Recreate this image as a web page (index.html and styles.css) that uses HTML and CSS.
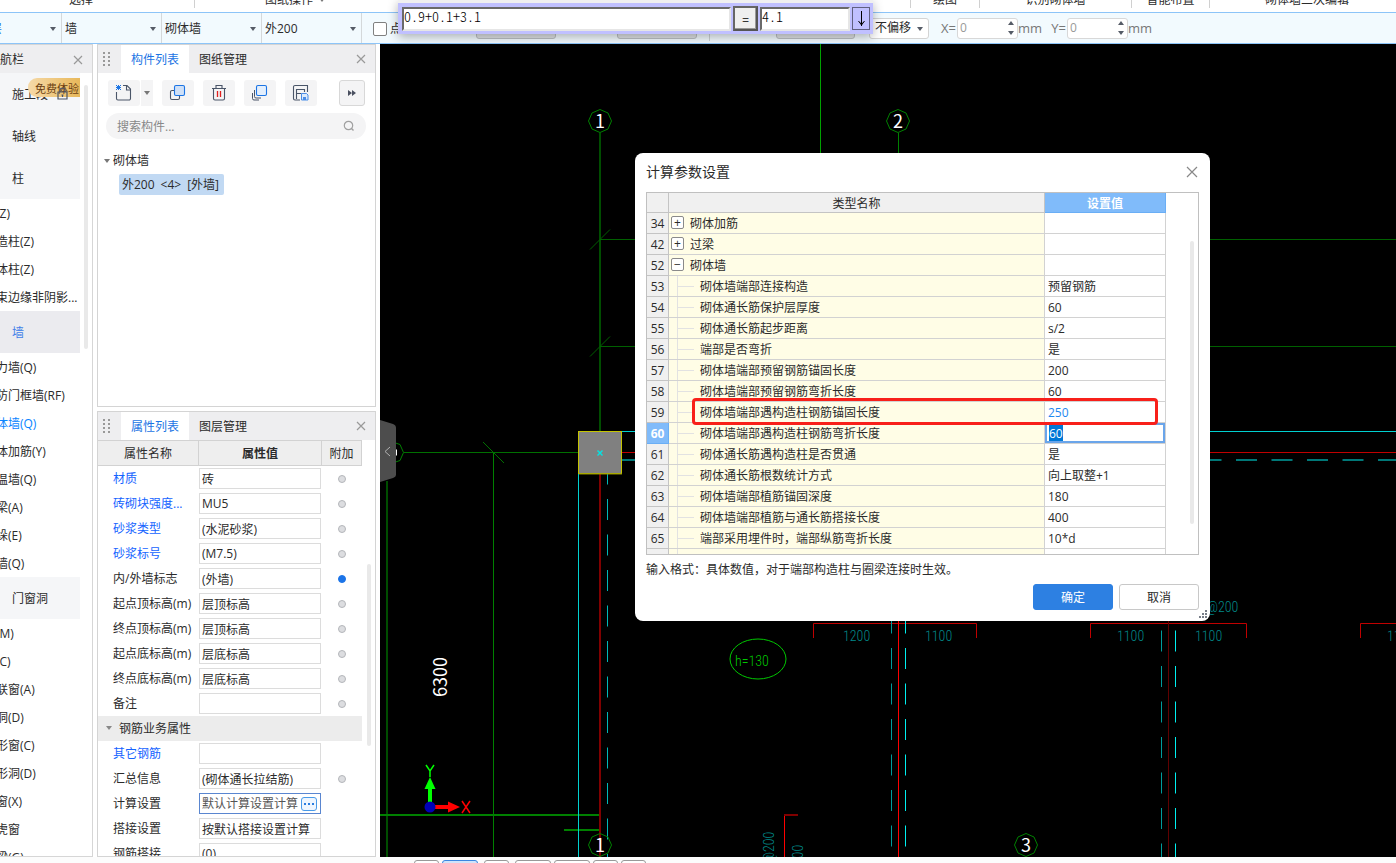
FILE: index.html
```html
<!DOCTYPE html>
<html lang="zh-CN">
<head>
<meta charset="utf-8">
<title>计算参数设置</title>
<link rel="stylesheet" href="styles.css">
</head>
<body>
<div class="ribbon">
  <div class="ribbon-group g-select">选择</div>
  <div class="ribbon-group g-sheet">图纸操作<i class="caret"></i></div>
  <div class="ribbon-group g-fill"></div>
  <div class="ribbon-group g-draw">绘图</div>
  <div class="ribbon-group g-detect">识别砌体墙</div>
  <div class="ribbon-group g-smart">智能布置</div>
  <div class="ribbon-group g-edit">砌体墙二次编辑</div>
</div>

<div class="options">
  <div class="combo combo-floor"><select aria-label="楼层"><option>首层</option></select></div>
  <div class="combo"><select aria-label="类别"><option>墙</option></select></div>
  <div class="combo"><select aria-label="类型"><option>砌体墙</option></select></div>
  <div class="combo"><select aria-label="构件"><option>外200</option></select></div>
  <label class="check"><input type="checkbox">点加长度</label>
  <button class="ghost" aria-label="长度"></button>
  <button class="ghost second" aria-label="反向长度"></button>
  <span class="rule"></span>
  <button class="ghost third" aria-label="角度"></button>
  <div class="combo boxed"><select aria-label="偏移"><option>不偏移</option></select></div>
  <label class="coord" for="cx">X=</label>
  <span class="spin"><input id="cx" value="0"><svg width="6" height="14" viewBox="0 0 6 14"><path d="M0 4 3 0l3 4zM0 10l3 4 3-4z"/></svg></span>
  <span class="unit">mm</span>
  <label class="coord" for="cy">Y=</label>
  <span class="spin"><input id="cy" value="0"><svg width="6" height="14" viewBox="0 0 6 14"><path d="M0 4 3 0l3 4zM0 10l3 4 3-4z"/></svg></span>
  <span class="unit">mm</span>
</div>

<div class="calc">
  <input class="expr" value="0.9+0.1+3.1" aria-label="算式">
  <button class="equals">=</button>
  <input class="result" value="4.1" aria-label="结果">
  <button class="drop" aria-label="展开"><svg width="9" height="18" viewBox="0 0 9 18"><path d="M4.500 1v15M1.500 11l3 4 3-4M3.500 13h2" fill="none" stroke="#000"/></svg></button>
</div>

<main class="work">
  <nav class="nav">
    <header class="nav-head"><span>导航栏</span><button class="close" aria-label="关闭"><svg width="10" height="10" viewBox="0 0 10 10"><path d="M1 1l8 8M9 1 1 9"/></svg></button></header>
    <div class="nav-body">
      <div class="nav-list">
        <div class="cat">施工段
          <span class="trial">免费体验</span>
          <svg class="lock" width="11" height="13" viewBox="0 0 11 13"><path d="M3 5V3.500a2.500 2.500 0 0 1 5 0V5M1 5h9v7H1zM5.500 7.500v2.500M4.500 8h2" fill="none" stroke="#4a5568" stroke-width="1.200"/></svg>
        </div>
        <div class="cat">轴线</div>
        <div class="cat">柱</div>
        <a class="sub">柱(Z)</a>
        <a class="sub">构造柱(Z)</a>
        <a class="sub">砌体柱(Z)</a>
        <a class="sub">约束边缘非阴影...</a>
        <div class="cat current">墙</div>
        <a class="sub">剪力墙(Q)</a>
        <a class="sub">人防门框墙(RF)</a>
        <a class="sub active">砌体墙(Q)</a>
        <a class="sub">砌体加筋(Y)</a>
        <a class="sub">保温墙(Q)</a>
        <a class="sub">暗梁(A)</a>
        <a class="sub">墙垛(E)</a>
        <a class="sub">幕墙(Q)</a>
        <div class="cat">门窗洞</div>
        <a class="sub">门(M)</a>
        <a class="sub">窗(C)</a>
        <a class="sub">门联窗(A)</a>
        <a class="sub">墙洞(D)</a>
        <a class="sub">带形窗(C)</a>
        <a class="sub">带形洞(D)</a>
        <a class="sub">飘窗(X)</a>
        <a class="sub">老虎窗</a>
        <a class="sub">过梁(G)</a>
      </div>
      <span class="thumb nav-thumb"></span>
    </div>
  </nav>

  <div class="side">
    <section class="panel parts">
      <header class="tabs">
        <svg class="grip" width="7" height="14" viewBox="0 0 7 14"><path d="M0 0h2v2H0zM5 0h2v2H5zM0 4h2v2H0zM5 4h2v2H5zM0 8h2v2H0zM5 8h2v2H5zM0 12h2v2H0zM5 12h2v2H5z"/></svg>
        <button class="tab on">构件列表</button>
        <button class="tab">图纸管理</button>
        <button class="close" aria-label="关闭"><svg width="10" height="10" viewBox="0 0 10 10"><path d="M1 1l8 8M9 1 1 9"/></svg></button>
      </header>
      <div class="tools">
        <div class="split">
          <button class="tool" aria-label="新建"><svg width="18" height="18" viewBox="0 0 18 18"><path d="M1.500 8v6.500a1.500 1.500 0 0 0 1.500 1.500h11a1.500 1.500 0 0 0 1.500-1.500V5L12 1.500H8M11.500 2v4h4" fill="none" stroke="#4a5568" stroke-width="1.100"/><path d="M1 1l5 5M6 1 1 6M3.500 1v5M1 3.500h5" stroke="#1b74e4" fill="none"/></svg></button>
          <button class="more" aria-label="更多新建"><i class="caret"></i></button>
        </div>
        <button class="tool" aria-label="复制"><svg width="18" height="18" viewBox="0 0 18 18"><rect x="1.500" y="6.500" width="9" height="9" rx="1.500" fill="#f4f4f5" stroke="#4a5568" stroke-width="1.100"/><rect x="5.500" y="1.500" width="10" height="10" rx="1.500" fill="#cfe0f7" stroke="#1b74e4" stroke-width="1.100"/></svg></button>
        <button class="tool" aria-label="删除"><svg width="18" height="18" viewBox="0 0 18 18"><path d="M2 4.500h14M6 4V1.500h6V4M3.500 5v9.500A1.500 1.500 0 0 0 5 16h8a1.500 1.500 0 0 0 1.500-1.500V5" fill="none" stroke="#4a5568" stroke-width="1.100"/><path d="M7.500 7v6M10.500 7v6" stroke="#e02020" stroke-width="1.300"/></svg></button>
        <button class="tool" aria-label="层间复制"><svg width="18" height="18" viewBox="0 0 18 18"><path d="M1.500 9v5.500A1.500 1.500 0 0 0 3 16h5M3.500 6v6.500A1.500 1.500 0 0 0 5 14h5" fill="none" stroke="#4a5568"/><rect x="5.500" y="1.500" width="10" height="10" rx="1.500" fill="#e3effd" stroke="#1b74e4" stroke-width="1.100"/></svg></button>
        <button class="tool" aria-label="存档"><svg width="18" height="18" viewBox="0 0 18 18"><path d="M8 16H3a1.500 1.500 0 0 1-1.500-1.500V3A1.500 1.500 0 0 1 3 1.500h12.500V8M4.500 15V5.500h8V8M4.500 9.500h5" fill="none" stroke="#4a5568" stroke-width="1.100"/><path d="M9.500 9.500h5l1.500 1.500v5H9.500z" fill="#dceafb" stroke="#4a8de8"/><path d="M11 13h3v3h-3z" fill="#4a8de8"/></svg></button>
        <button class="tool expand" aria-label="展开"><svg width="8" height="6" viewBox="0 0 8 6"><path d="M0 0l4 3-4 3zM4 0l4 3-4 3z" fill="#4a5060"/></svg></button>
      </div>
      <label class="search"><input placeholder="搜索构件..." aria-label="搜索构件"><svg width="12" height="12" viewBox="0 0 12 12"><circle cx="5.500" cy="5.500" r="4.200" fill="none" stroke="#a0a0a0" stroke-width="1.200"/><path d="M8.500 8.500l2 2" stroke="#a0a0a0" stroke-width="1.400"/></svg></label>
      <div class="tree">
        <div class="node"><i class="caret"></i>砌体墙</div>
        <div class="leaf"><span>外200</span><span>&lt;4&gt;</span><span>[外墙]</span></div>
      </div>
    </section>

    <section class="panel props">
      <header class="tabs">
        <svg class="grip" width="7" height="14" viewBox="0 0 7 14"><path d="M0 0h2v2H0zM5 0h2v2H5zM0 4h2v2H0zM5 4h2v2H5zM0 8h2v2H0zM5 8h2v2H5zM0 12h2v2H0zM5 12h2v2H5z"/></svg>
        <button class="tab on">属性列表</button>
        <button class="tab">图层管理</button>
        <button class="close" aria-label="关闭"><svg width="10" height="10" viewBox="0 0 10 10"><path d="M1 1l8 8M9 1 1 9"/></svg></button>
      </header>
      <div class="props-body">
        <table class="ptable">
          <thead><tr><th class="pn">属性名称</th><th class="pv">属性值</th><th class="pa">附加</th></tr></thead>
          <tbody>
            <tr><td class="blue"><label for="p1">材质</label></td><td><input id="p1" value="砖"></td><td><input type="radio" aria-label="附加"></td></tr>
            <tr><td class="blue"><label for="p2">砖砌块强度...</label></td><td><input id="p2" value="MU5"></td><td><input type="radio" aria-label="附加"></td></tr>
            <tr><td class="blue"><label for="p3">砂浆类型</label></td><td><input id="p3" value="(水泥砂浆)"></td><td><input type="radio" aria-label="附加"></td></tr>
            <tr><td class="blue"><label for="p4">砂浆标号</label></td><td><input id="p4" value="(M7.5)"></td><td><input type="radio" aria-label="附加"></td></tr>
            <tr><td><label for="p5">内/外墙标志</label></td><td><input id="p5" value="(外墙)"></td><td><input type="radio" checked aria-label="附加"></td></tr>
            <tr><td><label for="p6">起点顶标高(m)</label></td><td><input id="p6" value="层顶标高"></td><td><input type="radio" aria-label="附加"></td></tr>
            <tr><td><label for="p7">终点顶标高(m)</label></td><td><input id="p7" value="层顶标高"></td><td><input type="radio" aria-label="附加"></td></tr>
            <tr><td><label for="p8">起点底标高(m)</label></td><td><input id="p8" value="层底标高"></td><td><input type="radio" aria-label="附加"></td></tr>
            <tr><td><label for="p9">终点底标高(m)</label></td><td><input id="p9" value="层底标高"></td><td><input type="radio" aria-label="附加"></td></tr>
            <tr><td><label for="p10">备注</label></td><td><input id="p10" value=""></td><td><input type="radio" aria-label="附加"></td></tr>
            <tr class="group"><th colspan="3"><i class="caret"></i>钢筋业务属性</th></tr>
            <tr><td class="blue"><label for="p11">其它钢筋</label></td><td><input id="p11" value=""></td><td></td></tr>
            <tr><td><label for="p12">汇总信息</label></td><td><input id="p12" value="(砌体通长拉结筋)"></td><td><input type="radio" aria-label="附加"></td></tr>
            <tr><td><label for="p13">计算设置</label></td><td><div class="picker"><input id="p13" value="默认计算设置计算"><button aria-label="设置"><svg width="10" height="2" viewBox="0 0 10 2"><path d="M0 0h2v2H0zM4 0h2v2H4zM8 0h2v2H8z" fill="#2b7de0"/></svg></button></div></td><td></td></tr>
            <tr><td><label for="p14">搭接设置</label></td><td><input id="p14" value="按默认搭接设置计算"></td><td></td></tr>
            <tr><td><label for="p15">钢筋搭接</label></td><td><input id="p15" value="(0)"></td><td></td></tr>
          </tbody>
        </table>
        <span class="thumb props-thumb"></span>
      </div>
    </section>
  </div>

  <section class="canvas">
    <svg class="cad" width="100%" height="100%">
      <g transform="translate(-380 -44)" fill="none">
        <g stroke="#004d00" stroke-width="2">
          <path d="M600 133v298M387 481v376"/>
          <path stroke="#006000" stroke-width="1" d="M600 239.500h2400M600 346.500h2400M590 249.500l20-20M590 356.500l20-20"/>
        </g>
        <g stroke="#008000">
          <path stroke="#00a000" d="M820.500 44v120"/>
          <path d="M898.500 133v30M493.500 453v404"/>
          <path d="M404 452.500h174M483 442l21 21" stroke="#007000"/>
          <path d="M380 815h220M564 830h36" stroke-width="2"/>
        </g>
        <path d="M578.500 474v383" stroke="#00d0d0"/>
        <path d="M600 474v383" stroke="#800000" stroke-width="2"/>
        <path d="M607.500 463.500v394" stroke="#00b8b8" stroke-dasharray="21 14.500"/>
        <path d="M622 431.500h2400" stroke="#00d0d0"/>
        <path d="M622 452.500h2400" stroke="#c00000"/>
        <path d="M622 460h30M1200.500 460h2000" stroke="#007878" stroke-width="2" stroke-dasharray="21 14.500"/>
        <rect x="578.500" y="431.500" width="43" height="42" fill="#808080" stroke="#c4c400"/>
        <path d="M579 474h43" stroke="#909000"/>
        <path d="M597.500 450.500l5 5M602.500 450.500l-5 5" stroke="#00e5e5" stroke-width="1.400"/>
        <path d="M813.500 638v-14.500h163V638M1090.500 638v-14.500h156V638M1360.500 638v-14.500H3000" stroke="#c00000"/>
        <path d="M898.500 615v242" stroke="#f00"/>
        <path d="M1168.500 615v242" stroke="#600000"/>
        <g stroke-dasharray="21 14.500">
          <path d="M891.500 612.500v236" stroke="#009c9c"/>
          <path d="M905.500 612.500v236" stroke="#00f0f0"/>
          <path d="M1161.500 630.500v227" stroke="#009c9c"/>
          <path d="M1175.500 630.500v227" stroke="#00f0f0"/>
        </g>
        <path d="M784.500 857v-42" stroke="#f00"/>
        <path d="M784 815h14" stroke="#800000" stroke-width="2"/>
        <g stroke="#008000">
          <path d="M600 109.500l8 3.500 3.500 8-3.500 8-8 3.500-8-3.500-3.500-8 3.500-8z"/>
          <path d="M898 109.500l8 3.500 3.500 8-3.500 8-8 3.500-8-3.500-3.500-8 3.500-8z"/>
          <path d="M600 833.500l8 3.500 3.500 8-3.500 8-8 3.500-8-3.500-3.500-8 3.500-8z"/>
          <path d="M1026 833.500l8 3.500 3.500 8-3.500 8-8 3.500-8-3.500-3.500-8 3.500-8z"/>
          <path d="M394 442.500l6 2 3.500 8-3.500 8-6 2"/>
        </g>
        <ellipse cx="758" cy="659" rx="28" ry="20" stroke="#00c800"/>
        <g class="axis-text">
          <text x="600" y="128">1</text>
          <text x="898" y="128">2</text>
          <text x="600" y="852">1</text>
          <text x="1026" y="852">3</text>
          <text transform="translate(447 677) rotate(-90)">6300</text>
        </g>
        <g class="dim-text">
          <text x="843" y="641">1200</text>
          <text x="925" y="641">1100</text>
          <text x="1117" y="641">1100</text>
          <text x="1195" y="641">1100</text>
          <text x="1387" y="641">1100</text>
          <text x="1207" y="612">@200</text>
          <text transform="translate(774 863) rotate(-90)">@200</text>
          <text transform="translate(803 872) rotate(-90)">1100</text>
          <text class="lime" x="735" y="666">h=130</text>
        </g>
        <path d="M430 807v-20" stroke="#0f0" stroke-width="4"/>
        <path d="M424.500 789l5.500-12 5.500 12z" fill="#0f0"/>
        <path d="M430 807h20" stroke="#f00" stroke-width="4"/>
        <path d="M448 801.500l12 5.500-12 5.500z" fill="#f00"/>
        <circle cx="430" cy="807" r="5.500" fill="#0000b8"/>
        <path d="M426 765l4 6 4-6M430 771v6" stroke="#0f0" stroke-width="1.500"/>
        <path d="M462 801l8 12M470 801l-8 12" stroke="#f00" stroke-width="1.500"/>
        <path d="M380 420l13 4q3 1 3 4v47q0 2-3 3l-13 4z" fill="#4d4d4d"/>
        <path d="M390 447l-5 4.500 5 4.500" stroke="#b0b0b0"/>
        <path d="M396.500 449.500v6" stroke="#fff"/>
      </g>
    </svg>

    <div class="dialog" role="dialog" aria-labelledby="dt">
      <header class="dlg-head"><h1 id="dt">计算参数设置</h1><button class="close big" aria-label="关闭"><svg width="12" height="12" viewBox="0 0 12 12"><path d="M1 1l10 10M11 1 1 11"/></svg></button></header>
      <div class="grid-wrap">
        <table class="grid">
          <thead><tr><th class="c-no"></th><th class="c-name">类型名称</th><th class="c-val">设置值</th></tr></thead>
          <tbody>
            <tr><th>34</th><td class="top"><span class="branch"><button class="tog">+</button>砌体加筋</span></td><td></td></tr>
            <tr><th>42</th><td class="top"><span class="branch"><button class="tog">+</button>过梁</span></td><td></td></tr>
            <tr><th>52</th><td class="top"><span class="branch"><button class="tog">−</button>砌体墙</span></td><td></td></tr>
            <tr><th>53</th><td class="kid">砌体墙端部连接构造</td><td>预留钢筋</td></tr>
            <tr><th>54</th><td class="kid">砌体通长筋保护层厚度</td><td>60</td></tr>
            <tr><th>55</th><td class="kid">砌体通长筋起步距离</td><td>s/2</td></tr>
            <tr><th>56</th><td class="kid">端部是否弯折</td><td>是</td></tr>
            <tr><th>57</th><td class="kid">砌体墙端部预留钢筋锚固长度</td><td>200</td></tr>
            <tr><th>58</th><td class="kid">砌体墙端部预留钢筋弯折长度</td><td>60</td></tr>
            <tr><th>59</th><td class="kid">砌体墙端部遇构造柱钢筋锚固长度</td><td class="changed">250</td></tr>
            <tr class="cur"><th>60</th><td class="kid">砌体墙端部遇构造柱钢筋弯折长度</td><td class="edit"><input id="cell" value="60" aria-label="设置值"></td></tr>
            <tr><th>61</th><td class="kid">砌体通长筋遇构造柱是否贯通</td><td>是</td></tr>
            <tr><th>62</th><td class="kid">砌体通长筋根数统计方式</td><td>向上取整+1</td></tr>
            <tr><th>63</th><td class="kid">砌体墙端部植筋锚固深度</td><td>180</td></tr>
            <tr><th>64</th><td class="kid">砌体墙端部植筋与通长筋搭接长度</td><td>400</td></tr>
            <tr><th>65</th><td class="kid">端部采用埋件时，端部纵筋弯折长度</td><td>10*d</td></tr>
            <tr><th></th><td class="kid"></td><td></td></tr>
          </tbody>
        </table>
        <span class="thumb grid-thumb"></span>
      </div>
      <p class="hint">输入格式：具体数值，对于端部构造柱与圈梁连接时生效。</p>
      <footer class="dlg-foot"><button class="btn primary">确定</button><button class="btn">取消</button></footer>
      <span class="mark"></span>
      <svg class="resize" width="8" height="8" viewBox="0 0 8 8"><path d="M6 0h2v2H6zM3 3h2v2H3zM6 3h2v2H6zM0 6h2v2H0zM3 6h2v2H3zM6 6h2v2H6z" fill="#777d88"/></svg>
    </div>
  </section>
</main>

<footer class="status">
  <button aria-label="视图1"></button><button class="wide on" aria-label="视图2"></button><button class="apart" aria-label="视图3"></button><button class="wide apart" aria-label="视图4"></button><button class="wide" aria-label="视图5"></button><button aria-label="视图6"></button><button aria-label="视图7"></button>
</footer>
<script src="main.js"></script>
</body>
</html>
```
FILE: main.js
```js
document.getElementById('cell').select();
```
FILE: styles.css
```css
* { box-sizing: border-box; }
body {
  margin: 0;
  height: 100vh;
  display: flex;
  flex-direction: column;
  overflow: hidden;
  background: #fff;
  color: #2b2b2b;
  font: 12px/16px "Open Sans", "Noto Sans CJK SC", sans-serif;
}
button, input, select { font: inherit; color: inherit; margin: 0; padding: 0; border: 0; background: none; border-radius: 0; }
input { min-width: 0; outline: 0; }
svg { display: block; flex: none; }
.caret { flex: none; width: 0; height: 0; border: 3px solid transparent; border-top: 4px solid #777; border-bottom: 0; }
.thumb { flex: none; width: 4px; border-radius: 2px; background: #e9e9e9; }

/* ribbon captions */
.ribbon { flex: none; height: 12px; display: flex; overflow: hidden; }
.ribbon-group { flex: none; display: flex; align-items: flex-end; justify-content: center; gap: 6px; white-space: nowrap; border-right: 1px solid #d0d0d0; height: 8px; }
.ribbon-group .caret { margin-bottom: 6px; }
.g-select { width: 195px; padding-right: 32px; }
.g-sheet { width: 204px; border: 0; padding-right: 4px; }
.g-fill { width: 512px; }
.g-draw { width: 69px; }
.g-detect { width: 152px; }
.g-smart { width: 78px; }
.g-edit { width: 194px; border: 0; }

/* option bar */
.options { flex: none; height: 32px; display: flex; align-items: center; background: #f2fafe; border: 1px solid #8cc4f8; border-width: 1px 0; white-space: nowrap; }
.combo { position: relative; flex: none; width: 100px; height: 30px; border-right: 1px solid #d4d8da; }
.combo::after { content: ""; position: absolute; right: 5px; top: 14px; border: 3px solid transparent; border-top: 4px solid #555b66; border-bottom: 0; }
.combo select { appearance: none; width: 100%; height: 100%; padding: 1px 0 0 3px; outline: 0; }
.combo-floor { width: 62px; }
.combo-floor select { color: #1b74e4; padding-left: 0; text-indent: -22px; }
.combo.boxed { width: 60px; height: 21px; margin-left: 14px; background: #fff; border: 1px solid #d4d4d4; border-radius: 3px; }
.combo.boxed::after { top: 8px; }
.combo.boxed select { padding: 0 0 0 5px; }
.check { flex: none; width: 114px; padding: 1px 0 0 11px; display: flex; align-items: center; gap: 3px; overflow: hidden; }
.check input { appearance: none; flex: none; width: 14px; height: 14px; border: 1px solid #808080; border-radius: 2px; background: #fff; }
.ghost { flex: none; width: 80px; height: 22px; background: #dfe3e5; border: 1px solid #bcc0c4; border-radius: 3px; }
.ghost.second { margin-left: 61px; }
.ghost.third { margin-left: 66px; width: 79px; }
.rule { width: 1px; height: 26px; margin-left: 12px; background: #cdd2d5; }
.coord { flex: none; color: #777; width: 28px; text-align: right; font-size: 13px; padding-right: 1px; }
.spin { position: relative; flex: none; width: 61px; height: 21px; background: #fff; border: 1px solid #d8d8d8; border-radius: 3px; display: flex; align-items: center; padding: 0 3px 0 2px; color: #999; }
.spin input { flex: 1; }
.spin svg { fill: #555b66; }
.unit { flex: none; color: #777; font-size: 13px; width: 21px; }

/* floating calculator */
.calc { position: absolute; z-index: 5; left: 398px; top: 0; width: 475px; height: 34px; display: flex; align-items: center; gap: 2px; padding: 0 3px 0 4px; background: #c0c0ff; border-top: 3px solid #f0f0f0; box-shadow: 0 3px 10px rgba(0,0,0,.3); color: #000; font-family: "Noto Sans CJK SC", sans-serif; }
.calc input { font-size: 14px; font-weight: 300; font-feature-settings: "hwid"; height: 24px; background: #fff; border: 2px solid; border-color: #6a6a6a #e6e6e6 #e6e6e6 #6a6a6a; padding: 0 0 5px; }
.expr { flex: 1; }
.result { width: 90px; }
.equals { width: 25px; height: 25px; background: #efefef; border: 2px solid; border-color: #666 #555 #555 #666; box-shadow: inset -1px -1px #999; line-height: 16px; }
.drop { width: 18px; height: 23px; border: 1px solid #606080; display: flex; align-items: center; justify-content: center; }

.work { flex: 1; min-height: 0; display: flex; }
.close { width: 20px; height: 20px; display: flex; align-items: center; justify-content: center; margin-left: auto; }
.close path { stroke: #999; stroke-width: 1.2; fill: none; }

/* navigation */
.nav { flex: none; width: 93px; display: flex; flex-direction: column; overflow: hidden; border: 1px solid #d6d6d6; border-left: 0; margin-right: 4px; }
.nav-head { flex: none; height: 28px; display: flex; align-items: center; background: #eeeef0; text-indent: -12px; padding: 2px 4px 0 0; }
.nav-body { flex: 1; min-height: 0; display: flex; gap: 4px; overflow: hidden; }
.nav-list { width: 80px; flex: none; }
.nav-thumb { height: 264px; margin-top: 12px; }
.cat { position: relative; height: 42px; line-height: 44px; padding-left: 12px; background: #f5f6f8; }
.cat.current { background: #ebebef; color: #3f7ee8; }
.trial { position: absolute; left: 28px; top: 5px; width: 52px; height: 19px; line-height: 21px; padding-left: 7px; border-radius: 9px 0 0 9px; background: linear-gradient(90deg, #f5d9a8, #e8b85a); color: #6b3e10; font-size: 11px; white-space: nowrap; }
.lock { position: absolute; left: 57px; top: 14px; }
.sub { display: block; height: 28px; line-height: 30px; text-indent: -16px; white-space: nowrap; }
.sub.active { color: #0a84ff; }

/* docked panels */
.side { flex: none; width: 279px; display: flex; flex-direction: column; gap: 4px; margin-right: 4px; }
.panel { border: 1px solid #d4d4d4; background: #fff; overflow: hidden; }
.parts { flex: none; height: 363px; }
.props { flex: 1; min-height: 0; display: flex; flex-direction: column; }
.tabs { flex: none; height: 28px; display: flex; align-items: center; background: #eeeef0; padding-right: 4px; }
.grip { margin: 0 11px 0 5px; fill: #999; }
.tab { width: 68px; height: 28px; padding-top: 2px; }
.tab.on { background: #fff; color: #1b74e4; }
.tools { display: flex; gap: 9px; padding: 7px 10px; }
.split { display: flex; gap: 1px; }
.tool { width: 32px; height: 26px; background: #f4f4f5; border-radius: 3px; display: flex; align-items: center; justify-content: center; }
.more { width: 12px; background: #f4f4f5; display: flex; align-items: center; justify-content: center; }
.tool.expand { margin-left: auto; width: 26px; border: 1px solid #d8d8d8; }
.search { display: flex; align-items: center; height: 26px; margin: 0 9px 0 8px; padding: 0 11px; border-radius: 13px; background: #f4f4f5; }
.search input { flex: 1; padding-top: 2px; }
.search input::placeholder { color: #888; opacity: 1; }
.tree { padding: 13px 6px; }
.node { display: flex; align-items: center; gap: 3px; height: 17px; }
.leaf { display: inline-flex; gap: 6px; height: 21px; align-items: center; padding: 0 5px 0 3px; margin: 5px 0 0 15px; background: #c1d9f3; border-radius: 2px; }

.props-body { flex: 1; min-height: 0; display: flex; gap: 5px; overflow: hidden; align-items: flex-start; }
.props-thumb { height: 182px; margin-top: 124px; }
.ptable { flex: none; width: 264px; table-layout: fixed; border-collapse: separate; border-spacing: 0; }
.ptable thead th { height: 26px; padding: 2px 0 0; background: #eee; border: 1px solid #d2d2d2; border-width: 1px 1px 1px 0; font-weight: 400; }
.ptable thead .pv { font-weight: 700; }
.pn { width: 101px; }
.pv { width: 123px; }
.pa { width: 40px; }
.ptable td { height: 25px; padding: 0; text-align: left; white-space: nowrap; }
.ptable td:first-child { padding-left: 15px; }
.ptable td:last-child { text-align: center; }
.blue { color: #1463ff; }
.ptable td > input:not([type=radio]), .picker { display: block; width: 122px; height: 21px; border: 1px solid #dcdcdc; padding: 0 2px; }
.picker { display: flex; align-items: center; border-color: #5a86d0; color: #555; padding-right: 3px; }
.picker input { flex: 1; width: 90px; }
.picker button { width: 16px; height: 14px; border: 1px solid #4a9ae8; border-radius: 3px; background: #eef6ff; display: flex; align-items: center; justify-content: center; }
.ptable input[type=radio] { appearance: none; display: block; width: 8px; height: 8px; margin: 0 auto; border-radius: 50%; background: #dcdde0; border: 1px solid #b4b6ba; }
.ptable input[type=radio]:checked { background: #1b74e8; border-color: #1b74e8; }
.group th { height: 25px; padding: 0 0 0 8px; background: #ececec; text-align: left; font-weight: 400; }
.group .caret { display: inline-block; margin: 0 7px 3px 0; border-top-color: #888; }

/* drawing area */
.canvas { position: relative; flex: 1; min-width: 0; background: #000; overflow: hidden; }
.cad { position: absolute; inset: 0; }
.axis-text { fill: #fff; font: 18px "Noto Sans CJK SC", sans-serif; text-anchor: middle; }
.dim-text { fill: #008a8a; font: 300 14px "Liberation Sans Narrow", "Roboto Condensed", "DejaVu Sans Condensed", sans-serif; }
.dim-text .lime { fill: #00c800; }

/* parameter dialog */
.dialog { position: absolute; left: 255px; top: 109px; width: 575px; padding: 0 11px 11px; display: flex; flex-direction: column; background: #fff; border-radius: 8px; }
.dlg-head { display: flex; align-items: center; height: 39px; padding-bottom: 2px; }
.dlg-head h1 { margin: 0; font-size: 14px; font-weight: 400; line-height: 20px; }
.close.big { margin-right: -3px; }
.close.big path { stroke: #888; }
.grid-wrap { display: flex; align-items: flex-start; justify-content: space-between; height: 363px; overflow: hidden; border: 1px solid #c0c0c0; padding-right: 4px; }
.grid { width: 519px; table-layout: fixed; border-collapse: separate; border-spacing: 0; }
.grid th, .grid td { height: 21px; padding: 2px 0 0; border-bottom: 1px solid #d2d2d2; border-right: 1px solid #d2d2d2; line-height: 16px; white-space: nowrap; overflow: hidden; }
.grid thead th { height: 20px; background: #f0f0f0; font-weight: 400; border-color: #c4c4c4; }
.c-no { width: 22px; }
.c-name { width: 376px; }
.grid thead .c-val { background: #80bbfa; color: #fff; font-weight: 700; border-color: #6aaef5; }
.grid tbody th { background: #f0f0f0; font-weight: 400; border-color: #c4c4c4; }
.grid td:nth-child(2) { background: #fffde6; }
.grid td:nth-child(3) { padding-left: 3px; }
.grid .cur th { background: #80bbfa; color: #fff; font-weight: 700; border-color: #6aaef5; }
.grid .changed { color: #1e88f0; }
.branch { display: flex; align-items: flex-start; gap: 6px; padding-left: 2px; }
.tog { width: 13px; height: 13px; border: 1px solid #8a8a8a; border-radius: 2px; background: #fff; line-height: 10px; }
.grid .kid { position: relative; padding-left: 31px; }
.kid::before { content: ""; position: absolute; left: 8px; top: 0; width: 1px; height: 21px; background: #e2e2e2; }
.kid::after { content: ""; position: absolute; left: 9px; top: 10px; width: 16px; height: 1px; background: #e2e2e2; }
.grid td.edit { padding: 0; }
.edit input { display: block; width: 100%; height: 20px; border: 2px solid #6aa5ea; padding: 0 2px; }
.edit input::selection { background: #0078d7; color: #fff; }
.grid-thumb { height: 283px; margin-top: 48px; }
.hint { margin: 7px 0 6px; line-height: 16px; }
.dlg-foot { display: flex; justify-content: flex-end; gap: 6px; }
.btn { width: 80px; height: 26px; padding-top: 1px; border: 1px solid #c8c8c8; border-radius: 3px; background: #fff; }
.btn.primary { background: #2d80e2; border-color: #2d80e2; color: #fff; }
.mark { position: absolute; left: 57px; top: 245px; width: 466px; height: 27px; border: 3px solid #f8201a; border-radius: 4px; pointer-events: none; }
.resize { position: absolute; right: 3px; bottom: 3px; }

.status { flex: none; height: 6px; display: flex; gap: 3px; padding: 3px 0 0 414px; background: #fcfcfc; overflow: hidden; }
.status button { flex: none; width: 25px; height: 12px; border: 1px solid #999; border-radius: 3px; background: #fff; }
.status .wide { width: 36px; }
.status .on { background: #cfe3fa; border-color: #3a86e0; }
.status .apart { margin-left: 3px; }
```
